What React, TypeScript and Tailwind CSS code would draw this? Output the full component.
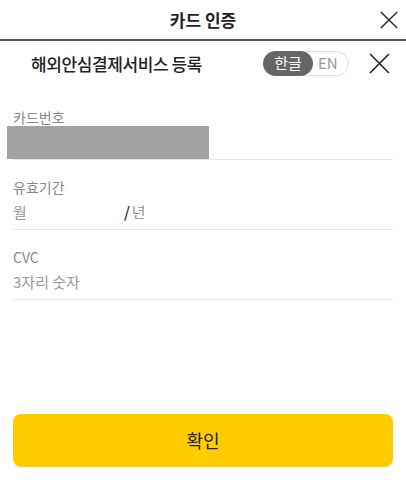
import React from "react";

const CloseIcon = ({ size }: { size: number }) => (
  <svg width={size} height={size} viewBox="0 0 20 20" fill="none">
    <path d="M1 1L19 19M19 1L1 19" stroke="#222" strokeWidth="1.5" />
  </svg>
);

export default function App() {
  return (
    <div className="w-[406px] h-[494px] bg-white text-[#222] font-['Noto_Sans_CJK_KR',sans-serif]">
      <div className="grid grid-cols-[1fr_auto_1fr] items-center h-[41px] border-b-2 border-[#555]">
        <div />
        <h1 className="text-[17px] font-bold leading-none">카드 인증</h1>
        <div className="flex justify-end pr-[8px]">
          <button type="button" className="p-0">
            <CloseIcon size={18} />
          </button>
        </div>
      </div>

      <div className="flex items-center h-[45px] pl-[31px] pr-[16px]">
        <h2 className="text-[17px] font-medium tracking-[-0.4px]">해외안심결제서비스 등록</h2>
        <div className="ml-auto flex items-center h-[25px] w-[86px] rounded-full border border-[#ddd]">
          <span className="flex items-center justify-center h-[25px] w-[50px] -ml-px rounded-full bg-[#666] text-white text-[15px]">
            한글
          </span>
          <span className="ml-[5px] text-[15px] text-[#999]">EN</span>
        </div>
        <button type="button" className="ml-[20px] p-0">
          <CloseIcon size={21} />
        </button>
      </div>

      <form className="px-[13px]" onSubmit={(e) => e.preventDefault()}>
        <div className="pt-[22px]">
          <label className="block text-[14px] leading-[18px] text-[#888]">카드번호</label>
          <div className="border-b border-[#e4e4e4]">
            <div className="-ml-[6px] w-[202px] h-[33px] bg-[#a3a3a3]" />
          </div>
        </div>

        <div className="pt-[18px]">
          <label className="block text-[14px] leading-[18px] text-[#888]">유효기간</label>
          <div className="flex items-center h-[34px] border-b border-[#e4e4e4] text-[15px]">
            <span className="w-[111px] text-[#999]">월</span>
            <span className="text-[#222] font-medium">/</span>
            <span className="ml-[2px] text-[#999]">년</span>
          </div>
        </div>

        <div className="pt-[18px]">
          <label className="block text-[14px] leading-[18px] text-[#888]">CVC</label>
          <div className="flex items-center h-[34px] border-b border-[#e4e4e4] text-[15px] text-[#999]">
            3자리 숫자
          </div>
        </div>

        <button
          type="submit"
          className="mt-[114px] w-full h-[53px] rounded-[8px] bg-[#ffcc00] text-[18px] font-normal text-[#222]"
        >
          확인
        </button>
      </form>
    </div>
  );
}
